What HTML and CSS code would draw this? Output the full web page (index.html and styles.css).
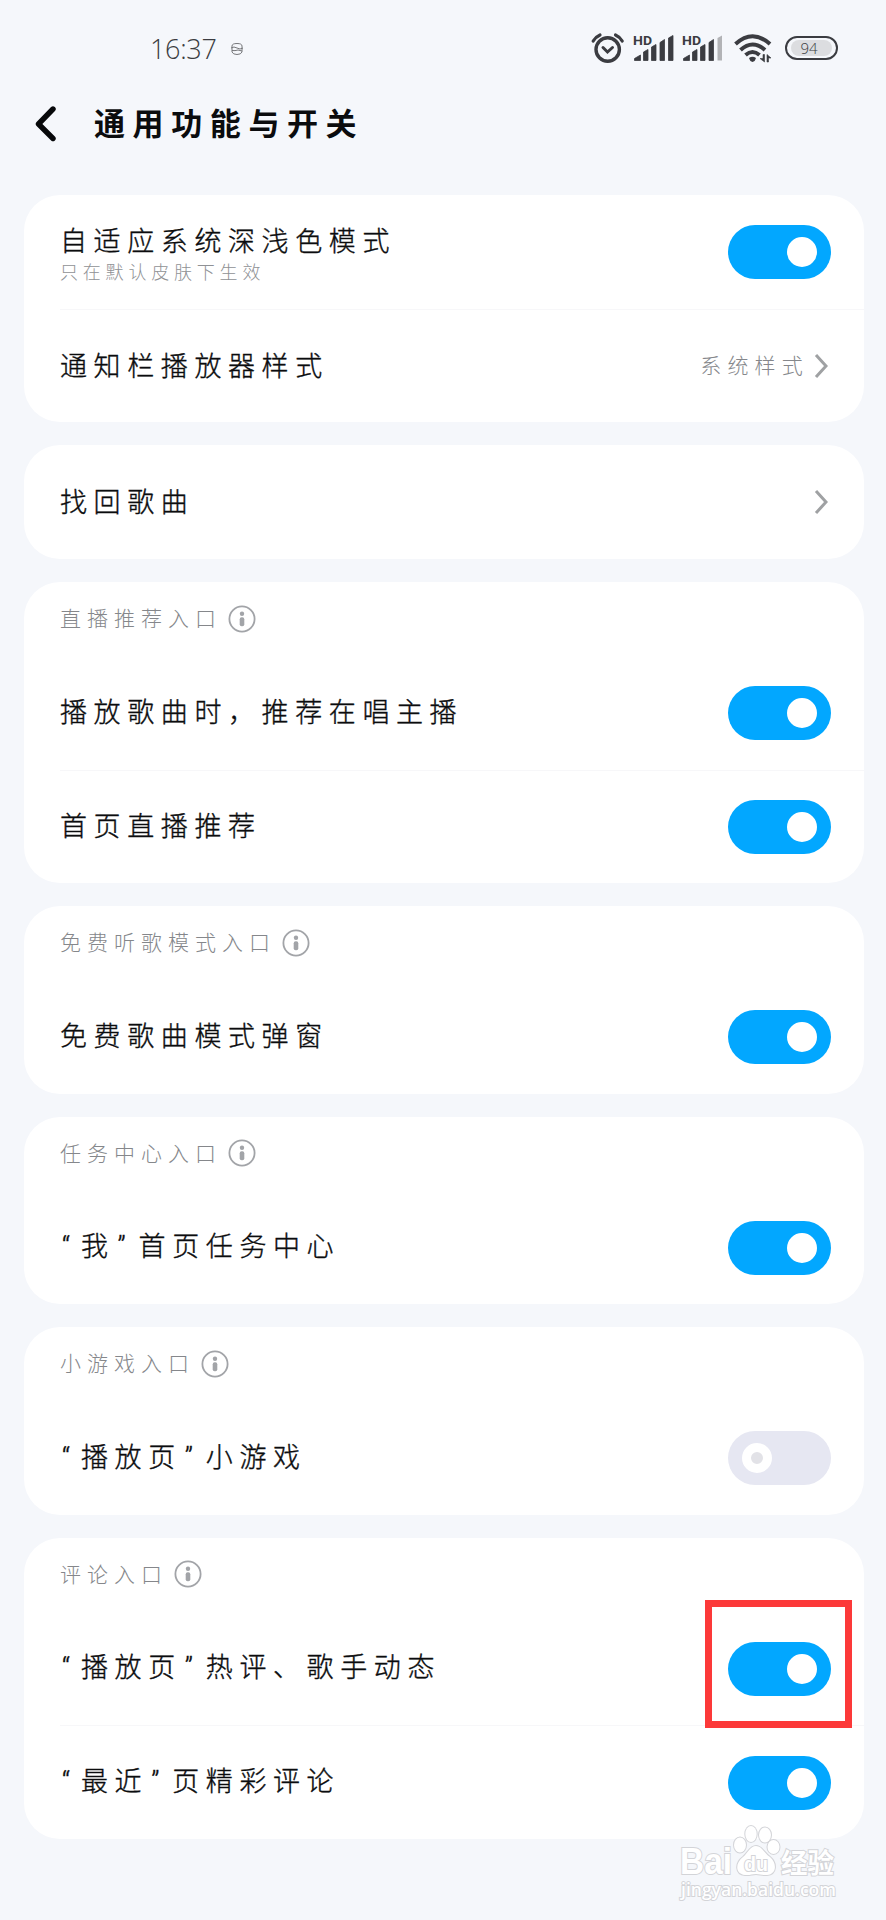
FILE: index.html
```html
<!DOCTYPE html>
<html lang="zh-CN">
<head>
    <meta charset="UTF-8">
    <meta name="viewport" content="width=device-width, initial-scale=1.0">
    <title>通用功能与开关</title>
    <link rel="stylesheet" href="styles.css">
</head>
<body>
    <!-- Shared icons -->
    <svg class="defs" width="0" height="0">
        <symbol id="info" viewBox="0 0 28 28">
            <circle cx="14" cy="14" r="12.6" fill="none" stroke="#a2a4a8" stroke-width="1.8"/>
            <circle cx="14" cy="8.8" r="2.2" fill="#a2a4a8"/>
            <rect x="11.7" y="12.2" width="4.6" height="9" rx="2" fill="#a2a4a8"/>
        </symbol>
        <symbol id="arrow" viewBox="0 0 14 26">
            <path d="M2 2 L12 13 L2 24" fill="none" stroke="#9fa1a3" stroke-width="3"/>
        </symbol>
    </svg>

    <div class="status-bar">
        <span class="time">16:37</span>
        <svg class="app-icon" width="14" height="14" viewBox="0 0 14 14">
            <path d="M2 4 Q2 1.5 7 1.5 Q12 1.5 12 4 V10 Q11 12.5 7 12.5 Q3 12.5 2 10 Z M1 6 Q4 4 7 6 Q10 8 13 6 M2 8.5 Q5 9 8 8 L12 9" fill="none" stroke="#77787b" stroke-width="1"/>
        </svg>
        <div class="status-icons">
            <svg class="alarm" width="34" height="32" viewBox="0 0 34 32">
                <g fill="none" stroke="#3b3c41" stroke-linecap="round">
                    <circle cx="16.7" cy="17.5" r="11.7" stroke-width="3.4"/>
                    <path d="M2.2 9 Q4.5 5 9 3 M24.5 3 Q29 5 31.2 9" stroke-width="3.2"/>
                    <path d="M12 15.5 L16.5 20 L21.5 15.5" stroke-width="3"/>
                </g>
            </svg>
            <svg class="signal" width="41" height="28" viewBox="0 0 41 28">
                <text x="0" y="11" class="hd" textLength="19" lengthAdjust="spacingAndGlyphs">HD</text>
                <path d="M1.5 26.5 V24.5 L7.5 21 V26.5 Z M10.5 26.5 V18 L15 15.5 V26.5 Z M18.5 26.5 V13 L23 10.5 V26.5 Z M27 26.5 V8.5 L31.5 5.5 V26.5 Z M35.5 26.5 V4 L40 1.5 V26.5 Z" fill="#3b3c41" stroke="#3b3c41" stroke-width="0.8" stroke-linejoin="round"/>
            </svg>
            <svg class="signal" width="41" height="28" viewBox="0 0 41 28">
                <text x="0" y="11" class="hd" textLength="19" lengthAdjust="spacingAndGlyphs">HD</text>
                <path d="M1.5 26.5 V24.5 L7.5 21 V26.5 Z M10.5 26.5 V18 L15 15.5 V26.5 Z M18.5 26.5 V13 L23 10.5 V26.5 Z M27 26.5 V8.5 L31.5 5.5 V26.5 Z" fill="#3b3c41" stroke="#3b3c41" stroke-width="0.8" stroke-linejoin="round"/>
                <path d="M35.5 26.5 V4 L40 1.5 V26.5 Z" fill="#b2b3b6"/>
            </svg>
            <svg class="wifi" width="38" height="30" viewBox="0 0 38 30">
                <g fill="none" stroke="#3b3c41" stroke-width="4">
                    <path d="M1.5 11 Q18.5 -4.5 36 11"/>
                    <path d="M6.5 17 Q18.5 6 31 17"/>
                    <path d="M11.5 22 Q18.5 16 25.5 22"/>
                </g>
                <path d="M15 25 Q18.5 22.5 22 25 Q21.5 28 18.5 29 Q15.5 28 15 25 Z" fill="#3b3c41"/>
                <path d="M30.5 21.5 V29 L26 25.5 H29 V21.5 Z M33 29 V21.5 L37 25 H34.5 V29 Z" fill="#3b3c41" stroke="#3b3c41" stroke-width="0.6"/>
            </svg>
            <div class="battery"><span class="battery-level">94</span></div>
        </div>
    </div>

    <div class="header">
        <svg class="back" width="22" height="36" viewBox="0 0 22 36">
            <path d="M18 3 L3.5 18 L18 32.5" fill="none" stroke="#07080a" stroke-width="5.4" stroke-linecap="round" stroke-linejoin="round"/>
        </svg>
        <h1 class="page-title">通用功能与开关</h1>
    </div>

    <div class="settings">
        <div class="card">
            <div class="row">
                <div class="text">
                    <div class="name">自适应系统深浅色模式</div>
                    <div class="hint">只在默认皮肤下生效</div>
                </div>
                <div class="toggle on"></div>
            </div>
            <div class="row">
                <div class="name">通知栏播放器样式</div>
                <div class="value">系统样式</div>
                <svg class="arrow" width="14" height="26"><use href="#arrow"/></svg>
            </div>
        </div>

        <div class="card">
            <div class="row">
                <div class="name">找回歌曲</div>
                <svg class="arrow" width="14" height="26"><use href="#arrow"/></svg>
            </div>
        </div>

        <div class="card">
            <div class="label"><span>直播推荐入口</span><svg class="info" width="28" height="28"><use href="#info"/></svg></div>
            <div class="row">
                <div class="name">播放歌曲时，推荐在唱主播</div>
                <div class="toggle on"></div>
            </div>
            <div class="row">
                <div class="name">首页直播推荐</div>
                <div class="toggle on"></div>
            </div>
        </div>

        <div class="card">
            <div class="label"><span>免费听歌模式入口</span><svg class="info" width="28" height="28"><use href="#info"/></svg></div>
            <div class="row">
                <div class="name">免费歌曲模式弹窗</div>
                <div class="toggle on"></div>
            </div>
        </div>

        <div class="card">
            <div class="label"><span>任务中心入口</span><svg class="info" width="28" height="28"><use href="#info"/></svg></div>
            <div class="row">
                <div class="name"><span class="quote open">“</span>我<span class="quote">”</span>首页任务中心</div>
                <div class="toggle on"></div>
            </div>
        </div>

        <div class="card">
            <div class="label"><span>小游戏入口</span><svg class="info" width="28" height="28"><use href="#info"/></svg></div>
            <div class="row">
                <div class="name"><span class="quote open">“</span>播放页<span class="quote">”</span>小游戏</div>
                <div class="toggle"></div>
            </div>
        </div>

        <div class="card">
            <div class="label"><span>评论入口</span><svg class="info" width="28" height="28"><use href="#info"/></svg></div>
            <div class="row">
                <div class="name"><span class="quote open">“</span>播放页<span class="quote">”</span>热评、歌手动态</div>
                <div class="toggle on"><div class="highlight"></div></div>
            </div>
            <div class="row">
                <div class="name"><span class="quote open">“</span>最近<span class="quote">”</span>页精彩评论</div>
                <div class="toggle on"></div>
            </div>
        </div>
    </div>

    <svg class="watermark" width="170" height="95" viewBox="0 0 170 95">
        <g class="mark">
            <text x="4" y="49" class="mark-name" textLength="52" lengthAdjust="spacingAndGlyphs">Bai</text>
            <ellipse cx="64" cy="20" rx="6" ry="7.5"/>
            <ellipse cx="75" cy="9" rx="5.7" ry="8"/>
            <ellipse cx="89" cy="10" rx="6" ry="7.5"/>
            <ellipse cx="97.5" cy="22" rx="6" ry="7"/>
            <path d="M80 21 C74 21 72 28 67 32 C59 38 59 49 69 50 C74 50.5 76 49 80 49 C84 49 86 50.5 91 50 C101 49 101 38 94 32 C88 28 86 21 80 21 Z"/>
            <text x="68" y="46" class="mark-du" textLength="24" lengthAdjust="spacingAndGlyphs">du</text>
            <text x="105" y="48" class="mark-cn" textLength="53" lengthAdjust="spacingAndGlyphs">经验</text>
            <text x="5" y="71" class="mark-url" textLength="155" lengthAdjust="spacingAndGlyphs">jingyan.baidu.com</text>
        </g>
    </svg>
</body>
</html>
```
FILE: styles.css
```css
*,
*::before {
    box-sizing: border-box;
}
body {
    position: relative;
    margin: 0;
    width: 886px;
    height: 1920px;
    overflow: hidden;
    background-color: #f5f7fb;
    color: #0b0c0e;
    font-family: "Noto Sans CJK SC", sans-serif;
    font-weight: 300;
}
svg {
    display: block;
    flex-shrink: 0;
}
.defs {
    position: absolute;
}

/* Status bar */
.status-bar {
    display: flex;
    align-items: center;
    height: 97px;
    padding: 0 48px 0 150px;
}
.time {
    width: 80px;
    font-family: "Open Sans", sans-serif;
    font-size: 27px;
    letter-spacing: -0.3px;
    color: #3b3c41;
}
.status-icons {
    display: flex;
    align-items: center;
    margin-top: -1px;
    margin-left: auto;
}
.signal {
    margin-left: 8px;
}
.hd {
    font-family: Roboto, sans-serif;
    font-size: 13px;
    font-weight: 700;
    fill: #3b3c41;
}
.wifi {
    margin-left: 11px;
}
.battery {
    width: 53px;
    height: 24px;
    margin-left: 13px;
    padding: 2px 4px;
    border: 2px solid #3b3c41;
    border-radius: 12px;
}
.battery-level {
    display: block;
    height: 16px;
    padding-right: 5px;
    border-radius: 8px;
    background-color: #dcdde0;
    color: #3b3c41;
    font-family: "Open Sans", sans-serif;
    font-size: 15px;
    line-height: 16px;
    text-align: center;
}

/* Page header */
.header {
    display: flex;
    align-items: center;
    height: 53px;
    padding-left: 35px;
}
.page-title {
    margin: -4px 0 0 37px;
    font-size: 31px;
    font-weight: 700;
    line-height: 40px;
    letter-spacing: 7.6px;
}

/* Setting groups */
.settings {
    display: flex;
    flex-direction: column;
    gap: 23.1px;
    padding: 45.4px 22px 0 24px;
}
.card {
    border-radius: 36px;
    background-color: #fff;
}
.label {
    display: flex;
    align-items: center;
    height: 74px;
    padding: 0 0 1px 36px;
    font-size: 21px;
    letter-spacing: 6px;
    color: #85878b;
}
.label span {
    margin-top: -3px;
}
.info {
    margin-left: 6px;
}
.row {
    display: flex;
    align-items: center;
    height: 113.5px;
    margin-left: 36px;
    padding-right: 34px;
}
.row + .row {
    border-top: 1px solid #f7f7f9;
}
.name {
    margin-top: -3px;
    font-size: 27px;
    line-height: 34px;
    letter-spacing: 6.6px;
    white-space: nowrap;
    -webkit-text-stroke: 0.35px #0b0c0e;
}
.text {
    padding-top: 4px;
}
.text .name {
    margin-top: 0;
}
.hint {
    margin-top: 1px;
    font-size: 18px;
    line-height: 27px;
    letter-spacing: 4.8px;
    color: #8f9195;
}
.quote {
    display: inline-block;
    width: 24px;
    padding-left: 3px;
    font-family: Roboto, sans-serif;
    letter-spacing: 0;
}
.quote.open {
    width: 21px;
    padding-left: 2px;
}
.value {
    margin-top: -4px;
    margin-left: auto;
    font-size: 21px;
    letter-spacing: 6.2px;
    color: #85878b;
}
.arrow {
    margin-left: auto;
    margin-top: -1px;
    margin-right: 2px;
}
.value + .arrow {
    margin-left: 5px;
}

/* Switches */
.toggle {
    position: relative;
    display: flex;
    align-items: center;
    width: 103px;
    height: 54px;
    margin-left: auto;
    margin-right: -1px;
    padding: 0 14px;
    border-radius: 27px;
    background-color: #e6e7f2;
}
.toggle::before {
    content: "";
    width: 30px;
    height: 30px;
    border: 9px solid #fff;
    border-radius: 50%;
    background-color: #e2e2e7;
}
.toggle.on {
    justify-content: flex-end;
    background-color: #02a7ff;
}
.toggle.on::before {
    background-color: #fff;
}
.highlight {
    position: absolute;
    left: -23px;
    top: -42px;
    width: 147px;
    height: 128px;
    border: 7px solid #fc3939;
}

/* Watermark over the page corner */
.watermark {
    position: absolute;
    left: 676px;
    top: 1825px;
}
.mark {
    fill: #fff;
    stroke: #d3d4d8;
    stroke-width: 2;
    paint-order: stroke;
}
.mark-name {
    font-family: "Liberation Sans", sans-serif;
    font-size: 36px;
    font-weight: 700;
}
.mark-du {
    font-family: "Liberation Sans", sans-serif;
    font-size: 21px;
    font-weight: 700;
}
.mark-cn {
    font-size: 27px;
    font-weight: 700;
}
.mark-url {
    font-family: "Open Sans", sans-serif;
    font-size: 18px;
    font-weight: 600;
}
```
